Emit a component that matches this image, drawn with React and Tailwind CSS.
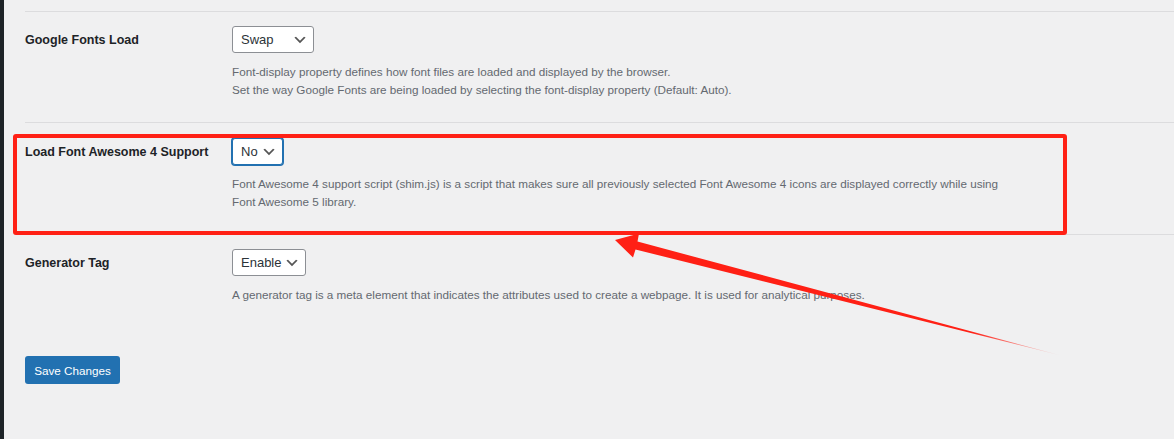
const font = { fontFamily: '"Liberation Sans", Arial, sans-serif' };

const Chevron = () => (
  <svg aria-hidden="true" className="h-4 w-4 shrink-0" viewBox="0 0 20 20">
    <path d="M5 6l5 5 5-5 2 1-7 7-7-7 2-1z" fill="#555" />
  </svg>
);

const Select = ({ value, width, focused }) => (
  <div
    className={`flex h-[27px] items-center justify-between rounded-[3px] border bg-white pl-[8px] pr-[5px] text-[13px] text-[#2c3338] ${width} ${
      focused ? "border-[#2271b1] shadow-[0_0_0_1px_#2271b1]" : "border-[#8c8f94]"
    }`}
  >
    <span>{value}</span>
    <Chevron />
  </div>
);

const rows = [
  {
    label: "Google Fonts Load",
    value: "Swap",
    width: "w-[82px]",
    pt: "pt-[14px]",
    pb: "pb-[23px]",
    desc: [
      "Font-display property defines how font files are loaded and displayed by the browser.",
      "Set the way Google Fonts are being loaded by selecting the font-display property (Default: Auto).",
    ],
  },
  {
    label: "Load Font Awesome 4 Support",
    value: "No",
    width: "w-[51px]",
    focused: true,
    pt: "pt-[15px]",
    pb: "pb-[23px]",
    desc: [
      "Font Awesome 4 support script (shim.js) is a script that makes sure all previously selected Font Awesome 4 icons are displayed correctly while using",
      "Font Awesome 5 library.",
    ],
  },
  {
    label: "Generator Tag",
    value: "Enable",
    width: "w-[74px]",
    pt: "pt-[14px]",
    pb: "pb-0",
    desc: [
      "A generator tag is a meta element that indicates the attributes used to create a webpage. It is used for analytical purposes.",
    ],
  },
];

export default function App() {
  return (
    <div className="relative flex min-h-screen bg-[#f0f0f1]" style={font}>
      <div className="w-[4px] shrink-0 bg-[#1d2327]" />
      <main className="flex-1 pl-[21px] pt-[11px]">
        {rows.map((row) => (
          <div
            className={`flex border-t border-[#dcdcde] ${row.pt} ${row.pb}`}
            key={row.label}
          >
            <div className="flex h-[28px] w-[207px] shrink-0 items-center text-[12.5px] font-semibold text-[#1d2327]">
              {row.label}
            </div>
            <div className="flex flex-col items-start">
              <Select focused={row.focused} value={row.value} width={row.width} />
              <div className="mt-[10px] text-[11.7px] leading-[18px] text-[#646970]">
                {row.desc.map((line) => (
                  <p key={line}>{line}</p>
                ))}
              </div>
            </div>
          </div>
        ))}

        <button
          className="mt-[52px] h-[28px] w-[95px] rounded-[3px] bg-[#2271b1] pt-[1px] text-[11.7px] text-white"
          type="button"
        >
          Save Changes
        </button>
      </main>

      {/* highlight box */}
      <div className="pointer-events-none absolute left-[13px] top-[134px] h-[101px] w-[1054px] rounded-[3px] border-4 border-[#ff2015]" />

      {/* arrow */}
      <svg
        aria-hidden="true"
        className="pointer-events-none absolute left-0 top-0"
        height="439"
        width="1174"
      >
        <defs>
          <linearGradient id="arrowFade" x1="615" x2="1060" y1="240" y2="355" gradientUnits="userSpaceOnUse">
            <stop offset="0" stopColor="#ff2015" />
            <stop offset="0.8" stopColor="#ff2015" />
            <stop offset="1" stopColor="#ff2015" stopOpacity="0.1" />
          </linearGradient>
        </defs>
        <polygon
          fill="url(#arrowFade)"
          points="615,240 639,233.5 637.5,241.5 1060,355.3 635.5,249.5 633,257.5"
        />
      </svg>
    </div>
  );
}
